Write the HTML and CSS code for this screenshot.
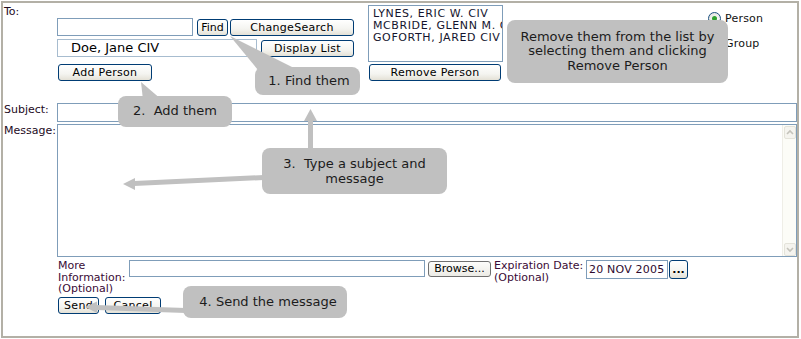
FILE: index.html
```html
<!DOCTYPE html>
<html>
  <head>
    <meta charset='utf-8'>
    <title>Send Message</title>
    <link rel="stylesheet" href="styles.css">
  </head>
  <body>
    <div class='page'>
      <form class='mail'>
        <div class='row to-row'>
          <div class='lbl'>To:</div>
          <div class='finder'>
            <div class='line'>
              <input class='txt search' type='text'>
              <button type='button' class='btn find'>Find</button>
              <button type='button' class='btn change'>ChangeSearch</button>
            </div>
            <div class='line second'>
              <div class='pick'>Doe, Jane CIV</div>
              <button type='button' class='btn display'>Display List</button>
            </div>
            <button type='button' class='btn add'>Add Person</button>
          </div>
          <div class='recips'>
            <div class='list'>
              <div>LYNES, ERIC W. CIV</div>
              <div>MCBRIDE, GLENN M. C</div>
              <div>GOFORTH, JARED CIV</div>
            </div>
            <button type='button' class='btn remove'>Remove Person</button>
          </div>
          <div class='kinds'>
            <div class='kind'><span class='radio on'></span>Person</div>
            <div class='kind'><span class='radio'></span>Group</div>
          </div>
        </div>
        <div class='row subj-row'>
          <div class='lbl'>Subject:</div>
          <input class='txt subject' type='text'>
        </div>
        <div class='row msg-row'>
          <div class='lbl'>Message:</div>
          <div class='msg'>
            <textarea></textarea>
            <div class='sbar'>
              <span class='sbtn'><svg width='10' height='9' viewBox='0 0 10 9'><path d='M2 6 L5 3 L8 6' fill='none' stroke='#c4c3bb' stroke-width='1.6'/></svg></span>
              <span class='sbtn'><svg width='10' height='9' viewBox='0 0 10 9'><path d='M2 3 L5 6 L8 3' fill='none' stroke='#c4c3bb' stroke-width='1.6'/></svg></span>
            </div>
          </div>
        </div>
        <div class='row more-row'>
          <div class='more-lbl'>More Information: (Optional)</div>
          <input class='txt file' type='text'>
          <button type='button' class='browse'>Browse...</button>
          <div class='exp-lbl'>Expiration Date: (Optional)</div>
          <input class='txt date' type='text' value='20 NOV 2005'>
          <button type='button' class='btn dots'>...</button>
        </div>
        <div class='row send-row'>
          <button type='button' class='btn send'>Send</button>
          <button type='button' class='btn cancel'>Cancel</button>
        </div>
      </form>
    </div>

    <svg class='pointers' width='801' height='339' viewBox='0 0 801 339'>
      <!-- callout tails -->
      <polygon points='230,36 258,70 298,70' />
      <polygon points='141,82 143,100 162,100' />
      <!-- 3: up to subject, left into message -->
      <rect x='308' y='119' width='5' height='32' />
      <polygon points='310.5,109 304,121 317,121' />
      <polygon points='264,175 264,180 134,186 134,181' />
      <polygon points='123,184 135,178 135,190' />
      <!-- 4: to send -->
      <polygon points='186,308 186,313 96,310 96,305' />
      <polygon points='85,307 97,301.5 97,313' />
    </svg>

    <div class='tip tip-find'>1. Find them</div>
    <div class='tip tip-add'>2.  Add them</div>
    <div class='tip tip-type'>3.  Type a subject and<br>message</div>
    <div class='tip tip-send'>4. Send the message</div>
    <div class='tip tip-remove'>Remove them from the list by<br>selecting them and clicking<br>Remove Person</div>
  </body>
</html>
```

FILE: styles.css
```css
body {
  margin: 0;
  position: relative;
  width: 801px;
  height: 339px;
  background: #fff;
  font-family: "DejaVu Sans", Verdana, sans-serif;
  font-size: 11px;
  color: #1d0a1d;
}

.page {
  margin: 1px;
  width: 798px;
  height: 337px;
  box-sizing: border-box;
  border: 2px solid #b3b0a6;
}

.row { display: flex; }
.lbl {
  width: 53px;
  flex: none;
  padding-left: 1px;
  line-height: 13px;
}

/* To */
.to-row .lbl { padding-top: 2px; }
.finder { padding-top: 15px; }
.line { display: flex; align-items: center; height: 18px; }
.line.second { margin-top: 3px; }

.txt {
  box-sizing: border-box;
  border: 1px solid #7f9db9;
  margin: 0;
  padding: 0 3px;
  font-family: "DejaVu Sans", Verdana, sans-serif;
  font-size: 11px;
  background: #fff;
  outline: none;
}
.search { width: 136px; height: 18px; }

.btn {
  box-sizing: border-box;
  height: 17px;
  margin: 0;
  padding: 0;
  border: 1px solid #003c74;
  border-radius: 3px;
  background: linear-gradient(#ffffff, #f4f4f0 60%, #e4e1d6);
  font-family: "DejaVu Sans", Verdana, sans-serif;
  font-size: 11px;
  letter-spacing: 0.3px;
  line-height: 15px;
  color: #000;
}
.find { width: 31px; margin-left: 4px; letter-spacing: 0; }
.change { width: 124px; margin-left: 2px; }

.pick {
  box-sizing: border-box;
  width: 200px;
  height: 18px;
  border: 1px solid #a7bccf;
  padding-left: 13px;
  font-size: 13px;
  line-height: 16px;
  color: #000;
}
.display { width: 93px; margin-left: 4px; }
.add { display: block; width: 94px; margin: 7px 0 0 1px; }

.recips { margin-left: 14px; padding-top: 2px; }
.list {
  box-sizing: border-box;
  width: 135px;
  height: 57px;
  border: 1px solid #7f9db9;
  padding: 2px 0 0 4px;
  line-height: 12px;
  letter-spacing: 0.6px;
  white-space: nowrap;
  overflow: hidden;
  color: #14142e;
}
.remove { display: block; width: 132px; margin: 2px 0 0 1px; }

.kinds { margin-left: auto; width: 89px; padding-top: 6px; }
.kind {
  display: flex;
  align-items: center;
  gap: 4px;
  height: 19px;
  margin-bottom: 6px;
  letter-spacing: 0.2px;
  color: #111;
}
.radio {
  box-sizing: border-box;
  width: 13px;
  height: 13px;
  border: 1px solid #1c5180;
  border-radius: 50%;
  background: radial-gradient(circle at 60% 60%, #fff, #dcdcd7);
  display: flex;
  align-items: center;
  justify-content: center;
}
.radio.on::after {
  content: "";
  width: 5px;
  height: 5px;
  border-radius: 50%;
  background: #2ea12e;
}

/* subject, message */
.subj-row { margin-top: 22px; }
.subject { flex: 1; height: 19px; }

.msg-row { margin-top: 2px; }
.msg {
  flex: 1;
  height: 133px;
  box-sizing: border-box;
  border: 1px solid #7f9db9;
  display: flex;
}
.msg textarea {
  flex: 1;
  border: none;
  resize: none;
  outline: none;
  margin: 0;
}
.sbar {
  width: 14px;
  box-sizing: border-box;
  border-left: 1px solid #efeee7;
  background: #fcfcf7;
  padding: 1px 0 0 1px;
  display: flex;
  flex-direction: column;
  justify-content: space-between;
}
.sbtn {
  box-sizing: border-box;
  width: 12px;
  height: 13px;
  border: 1px solid #e4e3da;
  border-radius: 2px;
  background: #f5f4ef;
  display: flex;
  align-items: center;
  justify-content: center;
}

/* attachment, expiry */
.more-row { margin-top: 3px; padding-left: 55px; align-items: flex-start; }
.more-lbl, .exp-lbl {
  line-height: 11.5px;
  color: #3a0b36;
}
.more-lbl { width: 71px; }
.file { width: 296px; height: 17px; }
.browse {
  box-sizing: border-box;
  width: 63px;
  height: 16px;
  margin: 1px 0 0 3px;
  padding: 0;
  border: 1px solid #707070;
  border-radius: 3px;
  background: linear-gradient(#fdfdfb, #ecebe5);
  font-family: "DejaVu Sans", Verdana, sans-serif;
  font-size: 11px;
  line-height: 14px;
  color: #000;
}
.exp-lbl { width: 92px; margin-left: 3px; }
.date { width: 82px; height: 19px; padding: 0 2px; color: #2e0a2e; letter-spacing: 0.2px; }
.dots { width: 19px; height: 19px; margin-left: 1px; font-weight: bold; line-height: 12px; letter-spacing: 0; }

.send-row { margin-top: 2px; padding-left: 55px; }
.send { width: 41px; }
.cancel { width: 56px; margin-left: 6px; }

/* help overlay */
.pointers {
  position: absolute;
  left: 0;
  top: 0;
  fill: #c0c0c0;
  pointer-events: none;
}
.tip {
  position: absolute;
  box-sizing: border-box;
  background: #c0c0c0;
  border-radius: 8px;
  font-size: 13px;
  line-height: 14.5px;
  color: #1c1c1c;
  text-align: center;
  white-space: pre;
  display: flex;
  align-items: center;
  justify-content: center;
}
.tip-find { left: 255px; top: 67px; width: 105px; height: 28px; padding-left: 3px; }
.tip-add { left: 118px; top: 96px; width: 114px; height: 31px; }
.tip-type { left: 262px; top: 148px; width: 185px; height: 46px; line-height: 15.5px; }
.tip-send { left: 183px; top: 286px; width: 164px; height: 32px; padding-left: 6px; }
.tip-remove { left: 507px; top: 20px; width: 221px; height: 63px; }
```
